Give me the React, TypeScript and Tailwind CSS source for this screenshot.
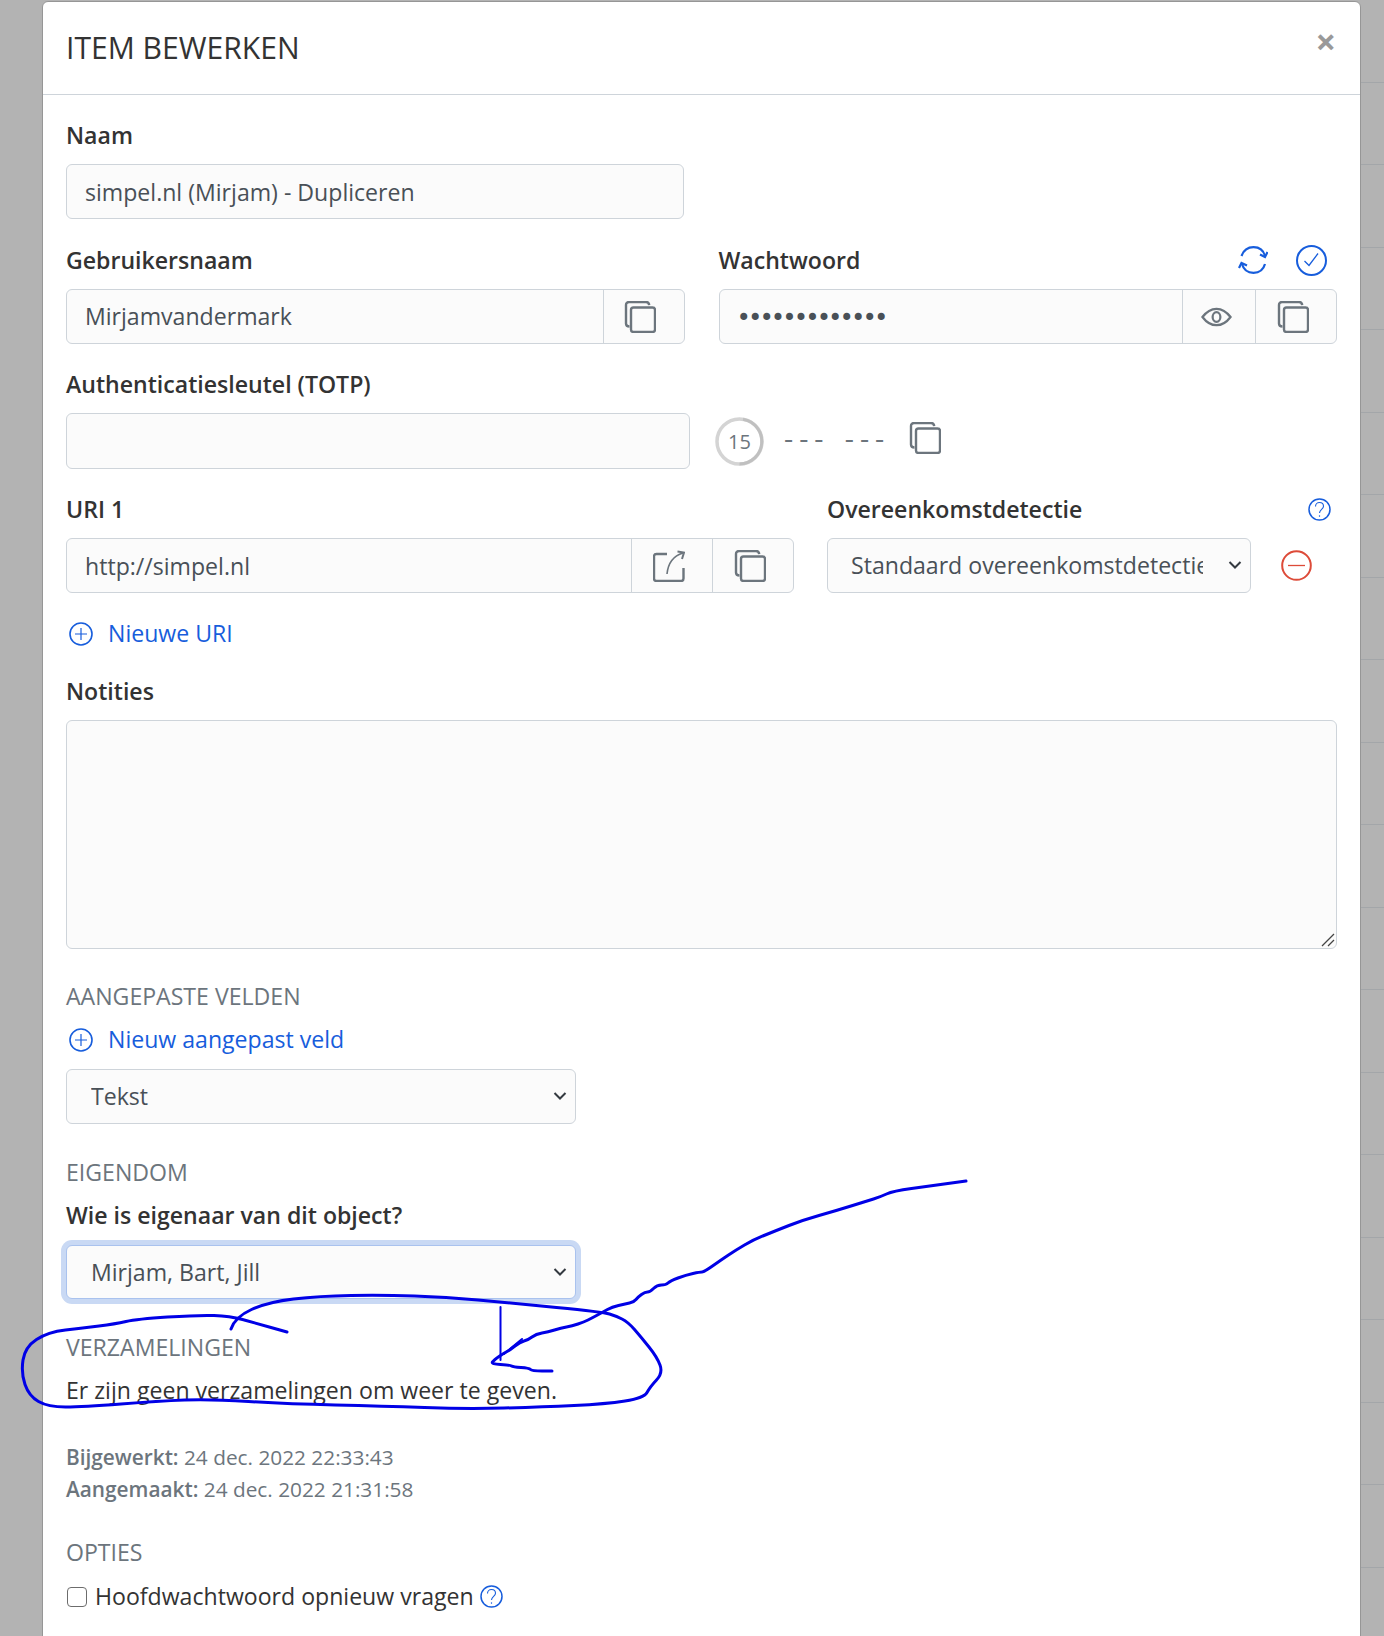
import React from 'react';

const rowLines = Array.from({ length: 20 }, (_, i) => i);

const tailStroke: [number, number][] = [
  [966, 1181], [930, 1186], [893, 1191], [880, 1197], [867, 1201], [835, 1211], [803, 1220], [775, 1231], [753, 1240], [736, 1250], [721, 1260],
  [704, 1272], [700, 1272], [686, 1275], [670, 1281], [666, 1285], [657, 1285], [650, 1292], [645, 1292], [638, 1297], [634, 1302], [625, 1304], [612, 1307], [603, 1312],
  [592, 1318], [584, 1322], [572, 1326], [561, 1328], [548, 1332], [536, 1334], [528, 1340], [520, 1342], [510, 1350], [504, 1353], [494, 1360], [491, 1364],
  [510, 1365], [513, 1367], [529, 1368], [532, 1371], [552, 1371],
];

const loopStroke: [number, number][] = [
  [231, 1329], [235, 1317], [268, 1302], [319, 1296], [383, 1295], [446, 1297], [510, 1303], [603, 1312], [616, 1316], [628, 1322],
  [641, 1337], [657, 1357], [663, 1373], [650, 1387], [644, 1398], [606, 1404], [542, 1407], [466, 1409], [383, 1406], [287, 1404],
  [210, 1399], [159, 1401], [83, 1407], [48, 1407], [29, 1396], [21, 1373], [25, 1347], [48, 1332], [83, 1328], [115, 1324],
  [137, 1319], [198, 1315], [230, 1316], [255, 1323], [287, 1332],
];

// smooth a list of points through the midpoints
function smooth(pts: [number, number][]) {
  let d = `M${pts[0][0]} ${pts[0][1]}`;
  for (let i = 1; i < pts.length - 1; i++) {
    const mx = (pts[i][0] + pts[i + 1][0]) / 2;
    const my = (pts[i][1] + pts[i + 1][1]) / 2;
    d += ` Q${pts[i][0]} ${pts[i][1]} ${mx} ${my}`;
  }
  const last = pts[pts.length - 1];
  return d + ` L${last[0]} ${last[1]}`;
}

function CopyIcon() {
  return (
    <svg width="32" height="32" viewBox="0 0 32 32" fill="none" stroke="#6c757d" strokeWidth="2.4">
      <path d="M5.5 25.5c-2 0-3.5-1-3.5-3V4c0-1.800 1.200-3 3-3h17c1.800 0 3 1 3.200 3.200" />
      <rect x="7" y="6.500" width="24" height="24.500" rx="2.500" />
    </svg>
  );
}

function EyeIcon() {
  return (
    <svg width="31" height="20" viewBox="0 0 32 20" fill="none" stroke="#6c757d" strokeWidth="2.300">
      <path d="M1.500 10C6 4 10.500 1.500 16 1.500S26 4 30.500 10C26 16 21.500 18.500 16 18.500S6 16 1.500 10z" />
      <ellipse cx="16" cy="10" rx="4" ry="5" />
    </svg>
  );
}

function ShareIcon() {
  return (
    <svg width="32" height="32" viewBox="0 0 32 32" fill="none" stroke="#6c757d" strokeWidth="2.4">
      <path d="M14 4H3.500C2 4 1 5 1 6.500V28.500C1 30 2 31 3.500 31H28C29.500 31 30.500 30 30.500 28.500V18" />
      <path d="M14 24C15 14 20 6 30 3" strokeWidth="1.600" />
      <path d="M24.500 1.500L31 2.500L29 9" strokeWidth="2" />
    </svg>
  );
}

function SyncIcon() {
  return (
    <svg width="30" height="28" viewBox="0 0 30 28" fill="none" stroke="#175ddc" strokeWidth="2.200">
      <path d="M3.500 10C5.500 4.500 10 1.200 15.500 1.200C21 1.200 25.500 4.500 27 10" />
      <path d="M27 18C25.500 23.500 21 26.800 15.500 26.800C10 26.800 5.500 23.500 4 18" />
      <path d="M22 8.500L27 11L29.500 6" />
      <path d="M9 19.500L3.500 17L1 22" />
    </svg>
  );
}

function CheckCircleIcon() {
  return (
    <svg width="31" height="31" viewBox="0 0 31 31" fill="none" stroke="#175ddc">
      <circle cx="15.500" cy="15.500" r="14.500" strokeWidth="2" />
      <path d="M8.500 16L13 20.500L22 8.500" strokeWidth="1.300" />
    </svg>
  );
}

function PlusCircleIcon() {
  return (
    <svg width="24" height="24" viewBox="0 0 24 24" fill="none" stroke="#175ddc">
      <circle cx="12" cy="12" r="11" strokeWidth="1.600" />
      <path d="M12 6v12M6 12h12" strokeWidth="1.200" />
    </svg>
  );
}

function MinusCircleIcon() {
  return (
    <svg width="31" height="31" viewBox="0 0 31 31" fill="none" stroke="#dd4b39">
      <circle cx="15.500" cy="15.500" r="14.300" strokeWidth="2" />
      <path d="M7 15.500h17" strokeWidth="1.300" />
    </svg>
  );
}

function HelpIcon() {
  return (
    <svg width="23" height="23" viewBox="0 0 23 23" fill="none" stroke="#175ddc">
      <circle cx="11.500" cy="11.500" r="10.500" strokeWidth="1.500" />
      <path d="M7.500 8.500C7.500 6 9.200 4.500 11.500 4.500C13.900 4.500 15.500 6 15.500 8.200C15.500 11 11.500 11.800 11.500 15" strokeWidth="1.100" />
      <circle cx="11.500" cy="18" r="0.500" fill="#175ddc" strokeWidth="0.500" />
    </svg>
  );
}

function Chevron() {
  return (
    <svg className="absolute right-[9px] top-[22px] pointer-events-none" width="14" height="10" viewBox="0 0 14 10" fill="none" stroke="#343a40" strokeWidth="2">
      <path d="M1.500 2L7 7.500L12.500 2" />
    </svg>
  );
}

function Label({ children }: { children: React.ReactNode }) {
  return <label className="block h-[35px] leading-[35px] font-semibold text-[#333333]">{children}</label>;
}

function SectionTitle({ children, className }: { children: React.ReactNode; className: string }) {
  return <h3 className={`h-[35px] leading-[35px] text-[#6c757d] uppercase ${className}`}>{children}</h3>;
}

export default function App() {
  return (
    <div className="flex h-[1636px] w-[1384px] overflow-hidden bg-[#b3b3b3] font-['Open_Sans',sans-serif] text-[23.100px] text-[#333333]">
      <div className="w-[42px] shrink-0" />

      <div className="w-[1319px] h-[1700px] shrink-0 mt-px bg-white border border-[#969696] rounded-t-[6px]">
        {/* Header */}
        <div className="h-[93px] border-b border-[#ced4da] pl-[23px] pr-[24px] flex justify-between items-start">
          <h2 className="mt-[24px] text-[30.100px] leading-[44px] text-[#333333]">ITEM BEWERKEN</h2>
          <button className="mt-[18px] text-[36px] leading-[44px] font-bold text-[#999999]">×</button>
        </div>

        <div className="pl-[23px] pr-[23px] pt-[23px]">
          <Label>Naam</Label>
          <input
            readOnly
            value="simpel.nl (Mirjam) - Dupliceren"
            className="mt-[11px] block w-[618px] h-[55px] px-[18px] bg-[#fbfbfb] border border-[#ced4da] rounded-[6px] text-[#495057] outline-none"
          />

          {/* Username + password */}
          <div className="mt-[24px] grid grid-cols-2 gap-x-[34px]">
            <div>
              <Label>Gebruikersnaam</Label>
              <div className="mt-[11px] flex h-[55px] bg-[#fbfbfb] border border-[#ced4da] rounded-[6px]">
                <input readOnly value="Mirjamvandermark" className="flex-1 min-w-0 px-[18px] bg-transparent text-[#495057] outline-none" />
                <button className="w-[81px] pr-[7px] border-l border-[#ced4da] flex items-center justify-center"><CopyIcon /></button>
              </div>
            </div>
            <div>
              <div className="flex items-center h-[35px] pr-[10px]">
                <label className="flex-1 font-semibold">Wachtwoord</label>
                <span className="-mt-[1px] mr-[2px]"><SyncIcon /></span>
                <span className="ml-[26px]"><CheckCircleIcon /></span>
              </div>
              <div className="mt-[11px] flex h-[55px] bg-[#fbfbfb] border border-[#ced4da] rounded-[6px]">
                <input readOnly type="password" value="abcdefghijklm" className="flex-1 min-w-0 px-[17px] pt-[3px] bg-transparent font-['DejaVu_Sans_Mono',monospace] text-[24px] tracking-[-3px] text-[#495057] outline-none" />
                <button className="w-[73px] pr-[6px] border-l border-[#ced4da] flex items-center justify-center"><EyeIcon /></button>
                <button className="w-[81px] pr-[7px] border-l border-[#ced4da] flex items-center justify-center"><CopyIcon /></button>
              </div>
            </div>
          </div>

          {/* TOTP */}
          <div className="mt-[23px]">
            <Label>Authenticatiesleutel (TOTP)</Label>
            <div className="mt-[11px] flex items-center h-[56px]">
              <input readOnly className="w-[624px] h-[56px] px-[19px] bg-[#fbfbfb] border border-[#ced4da] rounded-[6px] outline-none" />
              <div className="relative ml-[25px] w-[49px] h-[49px] flex items-center justify-center">
                <svg className="absolute inset-0" width="49" height="49" viewBox="0 0 49 49" fill="none">
                  <circle cx="24.500" cy="24.500" r="22.500" stroke="#d4d4d4" strokeWidth="3.500" />
                  <path d="M24.500 47A22.500 22.500 0 0 0 28 2.300" stroke="#c0c0c0" strokeWidth="3" />
                </svg>
                <span className="pt-[1px] text-[20px] text-[#6c757d]">15</span>
              </div>
              <span className="ml-[17px] pt-[1px] font-['Liberation_Mono',monospace] text-[25.300px] text-[#6c757d] whitespace-pre">--- ---</span>
              <span className="ml-[22px] -mt-[7px]"><CopyIcon /></span>
            </div>
          </div>

          {/* URI */}
          <div className="mt-[23px] flex gap-x-[33px]">
            <div className="w-[728px] shrink-0">
              <Label>URI 1</Label>
              <div className="mt-[11px] flex h-[55px] bg-[#fbfbfb] border border-[#ced4da] rounded-[6px]">
                <input readOnly value="http://simpel.nl" className="flex-1 min-w-0 px-[18px] pt-[2px] bg-transparent text-[#495057] outline-none" />
                <button className="w-[81px] pr-[7px] border-l border-[#ced4da] flex items-center justify-center"><ShareIcon /></button>
                <button className="w-[81px] pr-[7px] border-l border-[#ced4da] flex items-center justify-center"><CopyIcon /></button>
              </div>
            </div>
            <div className="flex-1">
              <div className="flex items-center justify-between h-[35px] pr-[6px]">
                <label className="font-semibold">Overeenkomstdetectie</label>
                <HelpIcon />
              </div>
              <div className="mt-[11px] flex items-center">
                <div className="relative w-[424px]">
                  <select className="appearance-none block w-full h-[55px] pl-[23px] pr-[47px] bg-[#fbfbfb] border border-[#ced4da] rounded-[6px] text-[#495057] outline-none">
                    <option>Standaard overeenkomstdetectie</option>
                  </select>
                  <Chevron />
                </div>
                <span className="ml-[30px]"><MinusCircleIcon /></span>
              </div>
            </div>
          </div>

          <a className="mt-[23px] h-[35px] flex items-center text-[#175ddc]">
            <span className="ml-[3px] mr-[15px]"><PlusCircleIcon /></span>Nieuwe URI
          </a>

          <div className="mt-[23px]">
            <Label>Notities</Label>
            <div className="relative mt-[11px]">
              <textarea readOnly className="block w-[1271px] h-[229px] bg-[#fbfbfb] border border-[#ced4da] rounded-[6px] outline-none resize-none" />
              <svg className="absolute right-[2px] bottom-[2px]" width="14" height="14" viewBox="0 0 14 14" fill="none" stroke="#444444" strokeWidth="1.300">
                <path d="M1 13L13 1M7 13L13 7" />
              </svg>
            </div>
          </div>

          <SectionTitle className="mt-[30px]">Aangepaste velden</SectionTitle>
          <a className="mt-[8px] h-[35px] flex items-center text-[#175ddc]">
            <span className="ml-[3px] mr-[15px]"><PlusCircleIcon /></span>Nieuw aangepast veld
          </a>
          <div className="relative mt-[12px] w-[510px]">
            <select className="appearance-none block w-full h-[55px] pl-[24px] pr-[40px] bg-[#fbfbfb] border border-[#ced4da] rounded-[6px] text-[#495057] outline-none">
              <option>Tekst</option>
            </select>
            <Chevron />
          </div>

          <SectionTitle className="mt-[31px]">Eigendom</SectionTitle>
          <div className="mt-[8px]"><Label>Wie is eigenaar van dit object?</Label></div>
          <div className="relative mt-[12px] w-[510px]">
            <select className="appearance-none block w-full h-[54px] pl-[24px] pr-[40px] bg-[#fbfbfb] border border-[#a9c2ee] rounded-[6px] text-[#495057] outline-none shadow-[0_0_0_5px_#c9d9f4]">
              <option>Mirjam, Bart, Jill</option>
            </select>
            <Chevron />
          </div>

          <SectionTitle className="mt-[31px]">Verzamelingen</SectionTitle>
          <p className="mt-[8px] h-[35px] leading-[35px]">Er zijn geen verzamelingen om weer te geven.</p>

          <div className="mt-[33px] text-[20.800px] leading-[32px] text-[#6c757d]">
            <div><b className="font-semibold">Bijgewerkt:</b> 24 dec. 2022 22:33:43</div>
            <div><b className="font-semibold">Aangemaakt:</b> 24 dec. 2022 21:31:58</div>
          </div>

          <SectionTitle className="mt-[30px]">Opties</SectionTitle>
          <div className="mt-[9px] h-[35px] flex items-center">
            <input type="checkbox" className="appearance-none w-[20px] h-[20px] ml-px bg-white border-[1.500px] border-[#6c6c6c] rounded-[4px]" />
            <span className="ml-[8px] mr-[6px]">Hoofdwachtwoord opnieuw vragen</span>
            <HelpIcon />
          </div>
        </div>
      </div>

      {/* table rows behind the modal */}
      <div className="flex-1">
        {rowLines.map((i) => (
          <div key={i} className="h-[82.500px] border-b border-[#a3a6a9]" />
        ))}
      </div>

      {/* pen annotation drawn over the screenshot */}
      <svg className="absolute left-0 top-0 pointer-events-none" width="1384" height="1636" viewBox="0 0 1384 1636" fill="none" stroke="#0000e6" strokeLinecap="round" strokeLinejoin="round">
        <path d={smooth(tailStroke)} strokeWidth="3" />
        <path d={smooth(loopStroke)} strokeWidth="3" />
        <path d="M504 1354L522 1339" strokeWidth="2" />
        <path d="M500.500 1307V1360" strokeWidth="2" />
      </svg>
    </div>
  );
}
